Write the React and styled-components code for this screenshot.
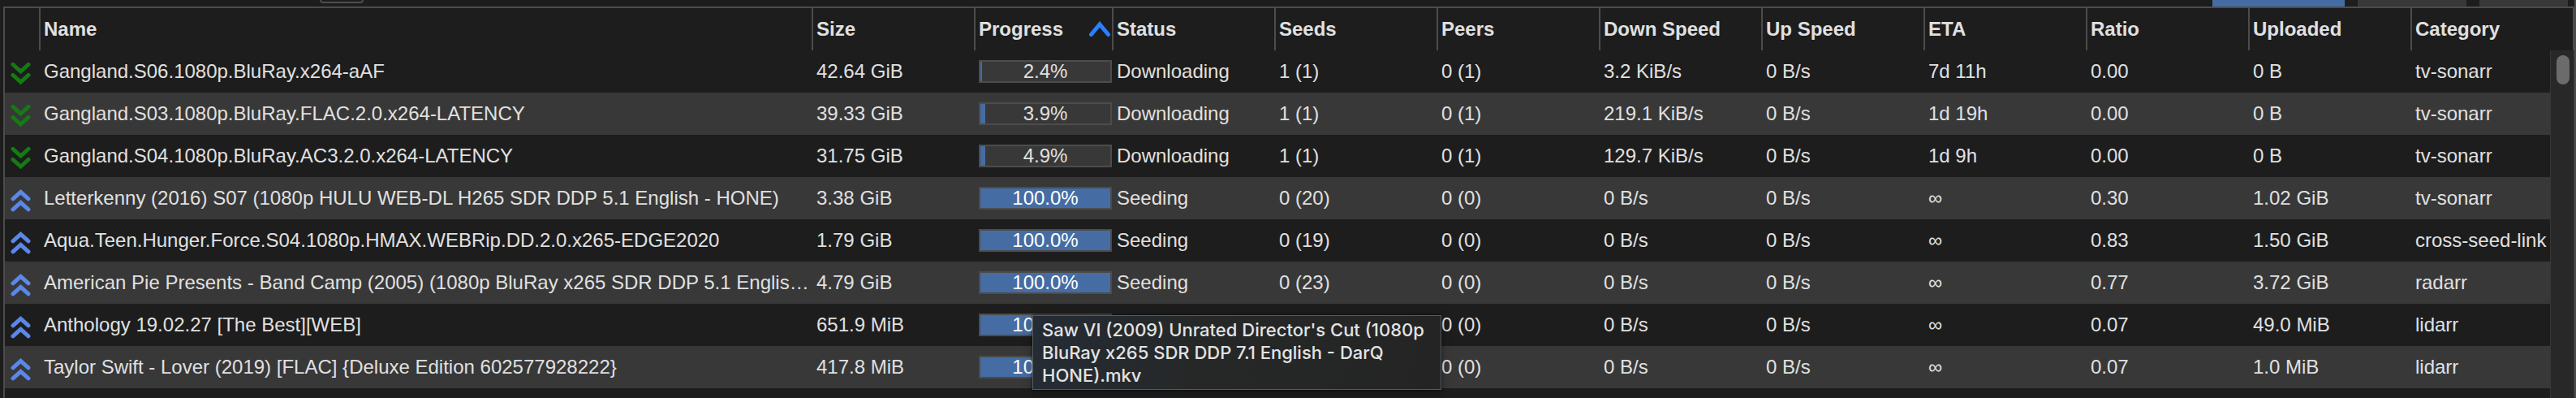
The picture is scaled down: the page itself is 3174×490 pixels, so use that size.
import React from "react";
import styled, { createGlobalStyle } from "styled-components";

const GlobalStyle = createGlobalStyle`
  * { box-sizing: border-box; }
  body {
    margin: 0;
    background: #1d1d1d;
    color: #e0e0e0;
    font: 24px/28px "Liberation Sans", Arial, sans-serif;
    overflow: hidden;
  }
`;

const Page = styled.div`
  position: relative;
  height: 100vh;
  display: flex;
  flex-direction: column;
  overflow: hidden;
`;

const TopBar = styled.div`
  flex: none;
  display: flex;
  align-items: flex-start;
  justify-content: space-between;
  height: 8px;
  padding: 0 8px 0 394px;
  border-right: 2px solid #4c4c4c;
`;

const FilterButton = styled.button`
  width: 54px;
  height: 4px;
  padding: 0;
  border: 2px solid #4c4c4c;
  border-top: 0;
  border-radius: 0 0 8px 8px;
  background: #1d1d1d;
`;

const Tabs = styled.div`
  display: flex;
  gap: 16px;
`;

const Tab = styled.button`
  width: ${(p) => p.$width}px;
  height: 8px;
  padding: 0;
  border: 0;
  background: ${(p) => (p.$active ? "#456da3" : "#383838")};
`;

const Panel = styled.main`
  flex: 1;
  min-height: 0;
  display: flex;
  flex-direction: column;
  margin-left: 4px;
  border: solid #4c4c4c;
  border-width: 2px 4px 0 2px;
`;

const Body = styled.div`
  flex: 1;
  min-height: 0;
  position: relative;
`;

const Table = styled.table`
  width: 100%;
  table-layout: fixed;
  border-collapse: separate;
  border-spacing: 0;
`;

const HeadCell = styled.th`
  height: 52px;
  padding: 0 4px;
  border-right: ${(p) => (p.$last ? 0 : 2)}px solid #4c4c4c;
  text-align: left;
  white-space: nowrap;
`;

const SortLabel = styled.span`
  display: flex;
  align-items: center;
  justify-content: space-between;
  margin-right: -2px;
`;

const Row = styled.tr`
  background: ${(p) => (p.$striped ? "#383838" : "#1d1d1d")};
`;

const Cell = styled.td`
  height: 52px;
  padding: 0 2px 0 4px;
  overflow: hidden;
  text-overflow: ellipsis;
  white-space: nowrap;
`;

const IconCell = styled(Cell)`
  padding: 0 0 0 7px;
  svg { display: block; margin-top: 4px; }
`;

const Bar = styled.div`
  height: 28px;
  border: 2px solid #4c4c4c;
  color: ${(p) => (p.$full ? "#fff" : "#e0e0e0")};
  line-height: 24px;
  text-align: center;
  background: linear-gradient(#456da3, #456da3) no-repeat 0 0 / ${(p) => p.$fill} 100% #383838;
`;

const Scrollbar = styled.div`
  position: absolute;
  top: 52px;
  right: -2px;
  bottom: 0;
  width: 30px;
  padding: 6px 7px;
  border: solid #383838;
  border-width: 0 1px;
  background: #282828;
`;

const Thumb = styled.div`
  width: 16px;
  height: 36px;
  border-radius: 8px;
  background: #6b6b6b;
`;

const Tooltip = styled.div`
  position: absolute;
  left: 1272px;
  top: 388px;
  width: 504px;
  padding: 3px 11px;
  border: 1px solid #5a5b5c;
  background: linear-gradient(100deg, #252c35 0, #262828 40%, #242424 100%);
  box-shadow: 0 0 2px #000, 0 4px 12px rgba(0, 0, 0, 0.3);
  color: #e3e3e3;
  font: 500 22px/28px Inter, sans-serif;
`;

const Chevrons = ({ down }) => (
  <svg width="25" height="29" viewBox="0 0 25 29" fill="none" stroke={down ? "#157a15" : "#5b87e8"} strokeWidth="5" strokeLinecap="round" aria-label={down ? "Downloading" : "Seeding"}>
    {down ? (
      <path d="M3 3.5 12.5 12 22 3.5M3 16.5 12.5 25 22 16.5" />
    ) : (
      <path d="M3 12.8 12.5 4.3 22 12.8M3 25.8 12.5 17.3 22 25.8" />
    )}
  </svg>
);

const SortArrow = () => (
  <svg width="26" height="20" viewBox="0 0 26 20" fill="none" stroke="#2a7fff" strokeWidth="5" strokeLinecap="round" aria-label="Sorted ascending">
    <path d="M2.5 16.5 13 4 23.5 16.5" />
  </svg>
);

const columns = [
  ["", 44], ["Name", 952], ["Size", 200], ["Progress", 170], ["Status", 200],
  ["Seeds", 200], ["Peers", 200], ["Down Speed", 200], ["Up Speed", 200],
  ["ETA", 200], ["Ratio", 200], ["Uploaded", 200], ["Category", 0],
];

const torrents = [
  ["Gangland.S06.1080p.BluRay.x264-aAF", "42.64 GiB", "2.4%", "Downloading", "1 (1)", "0 (1)", "3.2 KiB/s", "0 B/s", "7d 11h", "0.00", "0 B", "tv-sonarr"],
  ["Gangland.S03.1080p.BluRay.FLAC.2.0.x264-LATENCY", "39.33 GiB", "3.9%", "Downloading", "1 (1)", "0 (1)", "219.1 KiB/s", "0 B/s", "1d 19h", "0.00", "0 B", "tv-sonarr"],
  ["Gangland.S04.1080p.BluRay.AC3.2.0.x264-LATENCY", "31.75 GiB", "4.9%", "Downloading", "1 (1)", "0 (1)", "129.7 KiB/s", "0 B/s", "1d 9h", "0.00", "0 B", "tv-sonarr"],
  ["Letterkenny (2016) S07 (1080p HULU WEB-DL H265 SDR DDP 5.1 English - HONE)", "3.38 GiB", "100.0%", "Seeding", "0 (20)", "0 (0)", "0 B/s", "0 B/s", "∞", "0.30", "1.02 GiB", "tv-sonarr"],
  ["Aqua.Teen.Hunger.Force.S04.1080p.HMAX.WEBRip.DD.2.0.x265-EDGE2020", "1.79 GiB", "100.0%", "Seeding", "0 (19)", "0 (0)", "0 B/s", "0 B/s", "∞", "0.83", "1.50 GiB", "cross-seed-link"],
  ["American Pie Presents - Band Camp (2005) (1080p BluRay x265 SDR DDP 5.1 English - DarQ HONE)", "4.79 GiB", "100.0%", "Seeding", "0 (23)", "0 (0)", "0 B/s", "0 B/s", "∞", "0.77", "3.72 GiB", "radarr"],
  ["Anthology 19.02.27 [The Best][WEB]", "651.9 MiB", "100.0%", "Seeding", "0 (0)", "0 (0)", "0 B/s", "0 B/s", "∞", "0.07", "49.0 MiB", "lidarr"],
  ["Taylor Swift - Lover (2019) [FLAC] {Deluxe Edition 602577928222}", "417.8 MiB", "100.0%", "Seeding", "0 (0)", "0 (0)", "0 B/s", "0 B/s", "∞", "0.07", "1.0 MiB", "lidarr"],
];

const fills = { "2.4%": "2px", "3.9%": "6px", "4.9%": "6px", "100.0%": "100%" };

export default function App() {
  return (
    <Page>
      <GlobalStyle />
      <TopBar>
        <FilterButton aria-label="Filter" />
        <Tabs>
          <Tab $active $width={163} aria-label="Transfers" />
          <Tab $width={134} aria-label="Search" />
          <Tab $width={109} aria-label="Log" />
        </Tabs>
      </TopBar>
      <Panel>
        <Body>
          <Table>
            <colgroup>
              {columns.map(([name, width]) => (
                <col key={name} style={width ? { width } : undefined} />
              ))}
            </colgroup>
            <thead>
              <tr>
                {columns.map(([name], i) => (
                  <HeadCell key={name} scope="col" $last={i === columns.length - 1}>
                    {name === "Progress" ? <SortLabel>{name}<SortArrow /></SortLabel> : name}
                  </HeadCell>
                ))}
              </tr>
            </thead>
            <tbody>
              {torrents.map((torrent, i) => (
                <Row key={torrent[0]} $striped={i % 2 === 1}>
                  <IconCell><Chevrons down={torrent[3] === "Downloading"} /></IconCell>
                  {torrent.map((value, c) => (
                    <Cell key={c}>
                      {c === 2 ? (
                        <Bar $fill={fills[value]} $full={value === "100.0%"}>{value}</Bar>
                      ) : (
                        value
                      )}
                    </Cell>
                  ))}
                </Row>
              ))}
            </tbody>
          </Table>
          <Scrollbar><Thumb /></Scrollbar>
        </Body>
      </Panel>
      <Tooltip role="tooltip">
        Saw VI (2009) Unrated Director's Cut (1080p BluRay x265 SDR DDP 7.1 English - DarQ HONE).mkv
      </Tooltip>
    </Page>
  );
}
